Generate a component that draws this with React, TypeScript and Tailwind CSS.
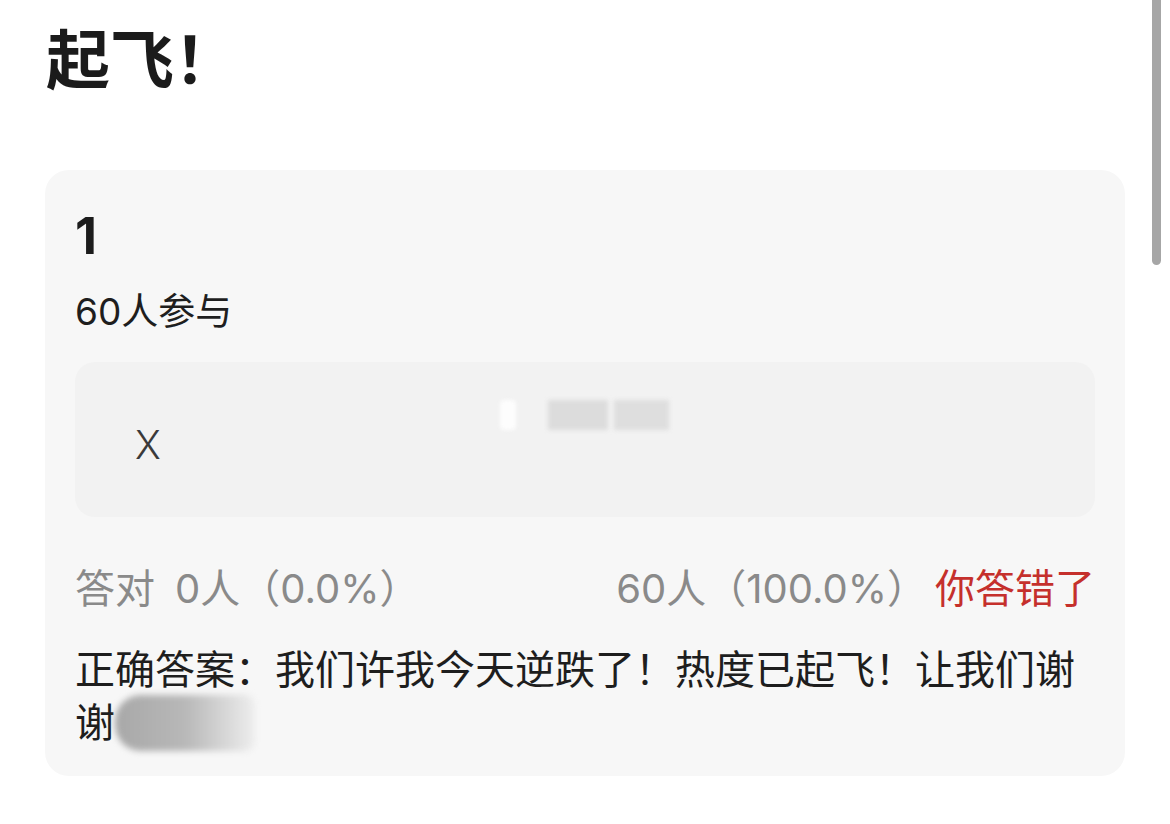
import React from "react";

const font = { fontFamily: '"Inter", "Noto Sans CJK SC", sans-serif' };

export default function App() {
  return (
    <div className="relative w-[1170px] h-[824px] overflow-hidden bg-white" style={font}>
      <div className="px-[45px] pt-[28px]">
        <h1 className="text-[64px] leading-[64px] font-bold text-[#1b1b1b] pl-[1px]">起飞！</h1>

        <div className="mt-[78px] rounded-[24px] bg-[#f7f7f7] px-[30px] pt-[41px] pb-[25px]">
          <div className="text-[51px] leading-[50px] font-bold text-[#1c1c1c]">1</div>
          <div className="mt-[32px] text-[37px] leading-[37px] text-[#1e1e1e]">60人参与</div>

          <div className="relative mt-[32px] h-[155px] rounded-[20px] bg-[#f2f2f2] flex items-center pl-[60px]">
            <span className="text-[39px] leading-[39px] font-light text-[#3a3a3a] mt-[10px]">X</span>
            <div className="absolute left-[425px] top-[38px] h-[30px] w-[175px] flex items-stretch gap-[6px] blur-[2px]">
              <div className="w-[16px] bg-[#fdfdfd] rounded-sm" />
              <div className="w-[20px]" />
              <div className="w-[60px] bg-[#dcdcdc]" />
              <div className="w-[55px] bg-[#dedede]" />
            </div>
          </div>

          <div className="mt-[46px] flex items-center justify-between text-[40px] leading-[51px] text-[#8a8a8a]">
            <div className="flex">
              <span>答对</span>
              <span className="ml-[20px]">0人（0.0%）</span>
            </div>
            <div className="flex gap-[8px]">
              <span>60人（100.0%）</span>
              <span className="text-[#c5302c]">你答错了</span>
            </div>
          </div>

          <p className="mt-[30px] text-[40px] leading-[51px] text-[#1e1e1e]">
            正确答案：我们许我今天逆跌了！热度已起飞！让我们谢谢
            <span className="inline-block align-[-14px] ml-[0px] h-[56px] w-[140px] rounded-l-[26px] rounded-r-[10px] bg-gradient-to-r from-[#a8a8a8] via-[#b8b8b8] to-[#eeeeee] blur-[3px]" />
          </p>
        </div>
      </div>

      <div className="absolute right-[9px] top-0 h-[265px] w-[9px] rounded-b-full bg-[#a6a6a6]" />
    </div>
  );
}
